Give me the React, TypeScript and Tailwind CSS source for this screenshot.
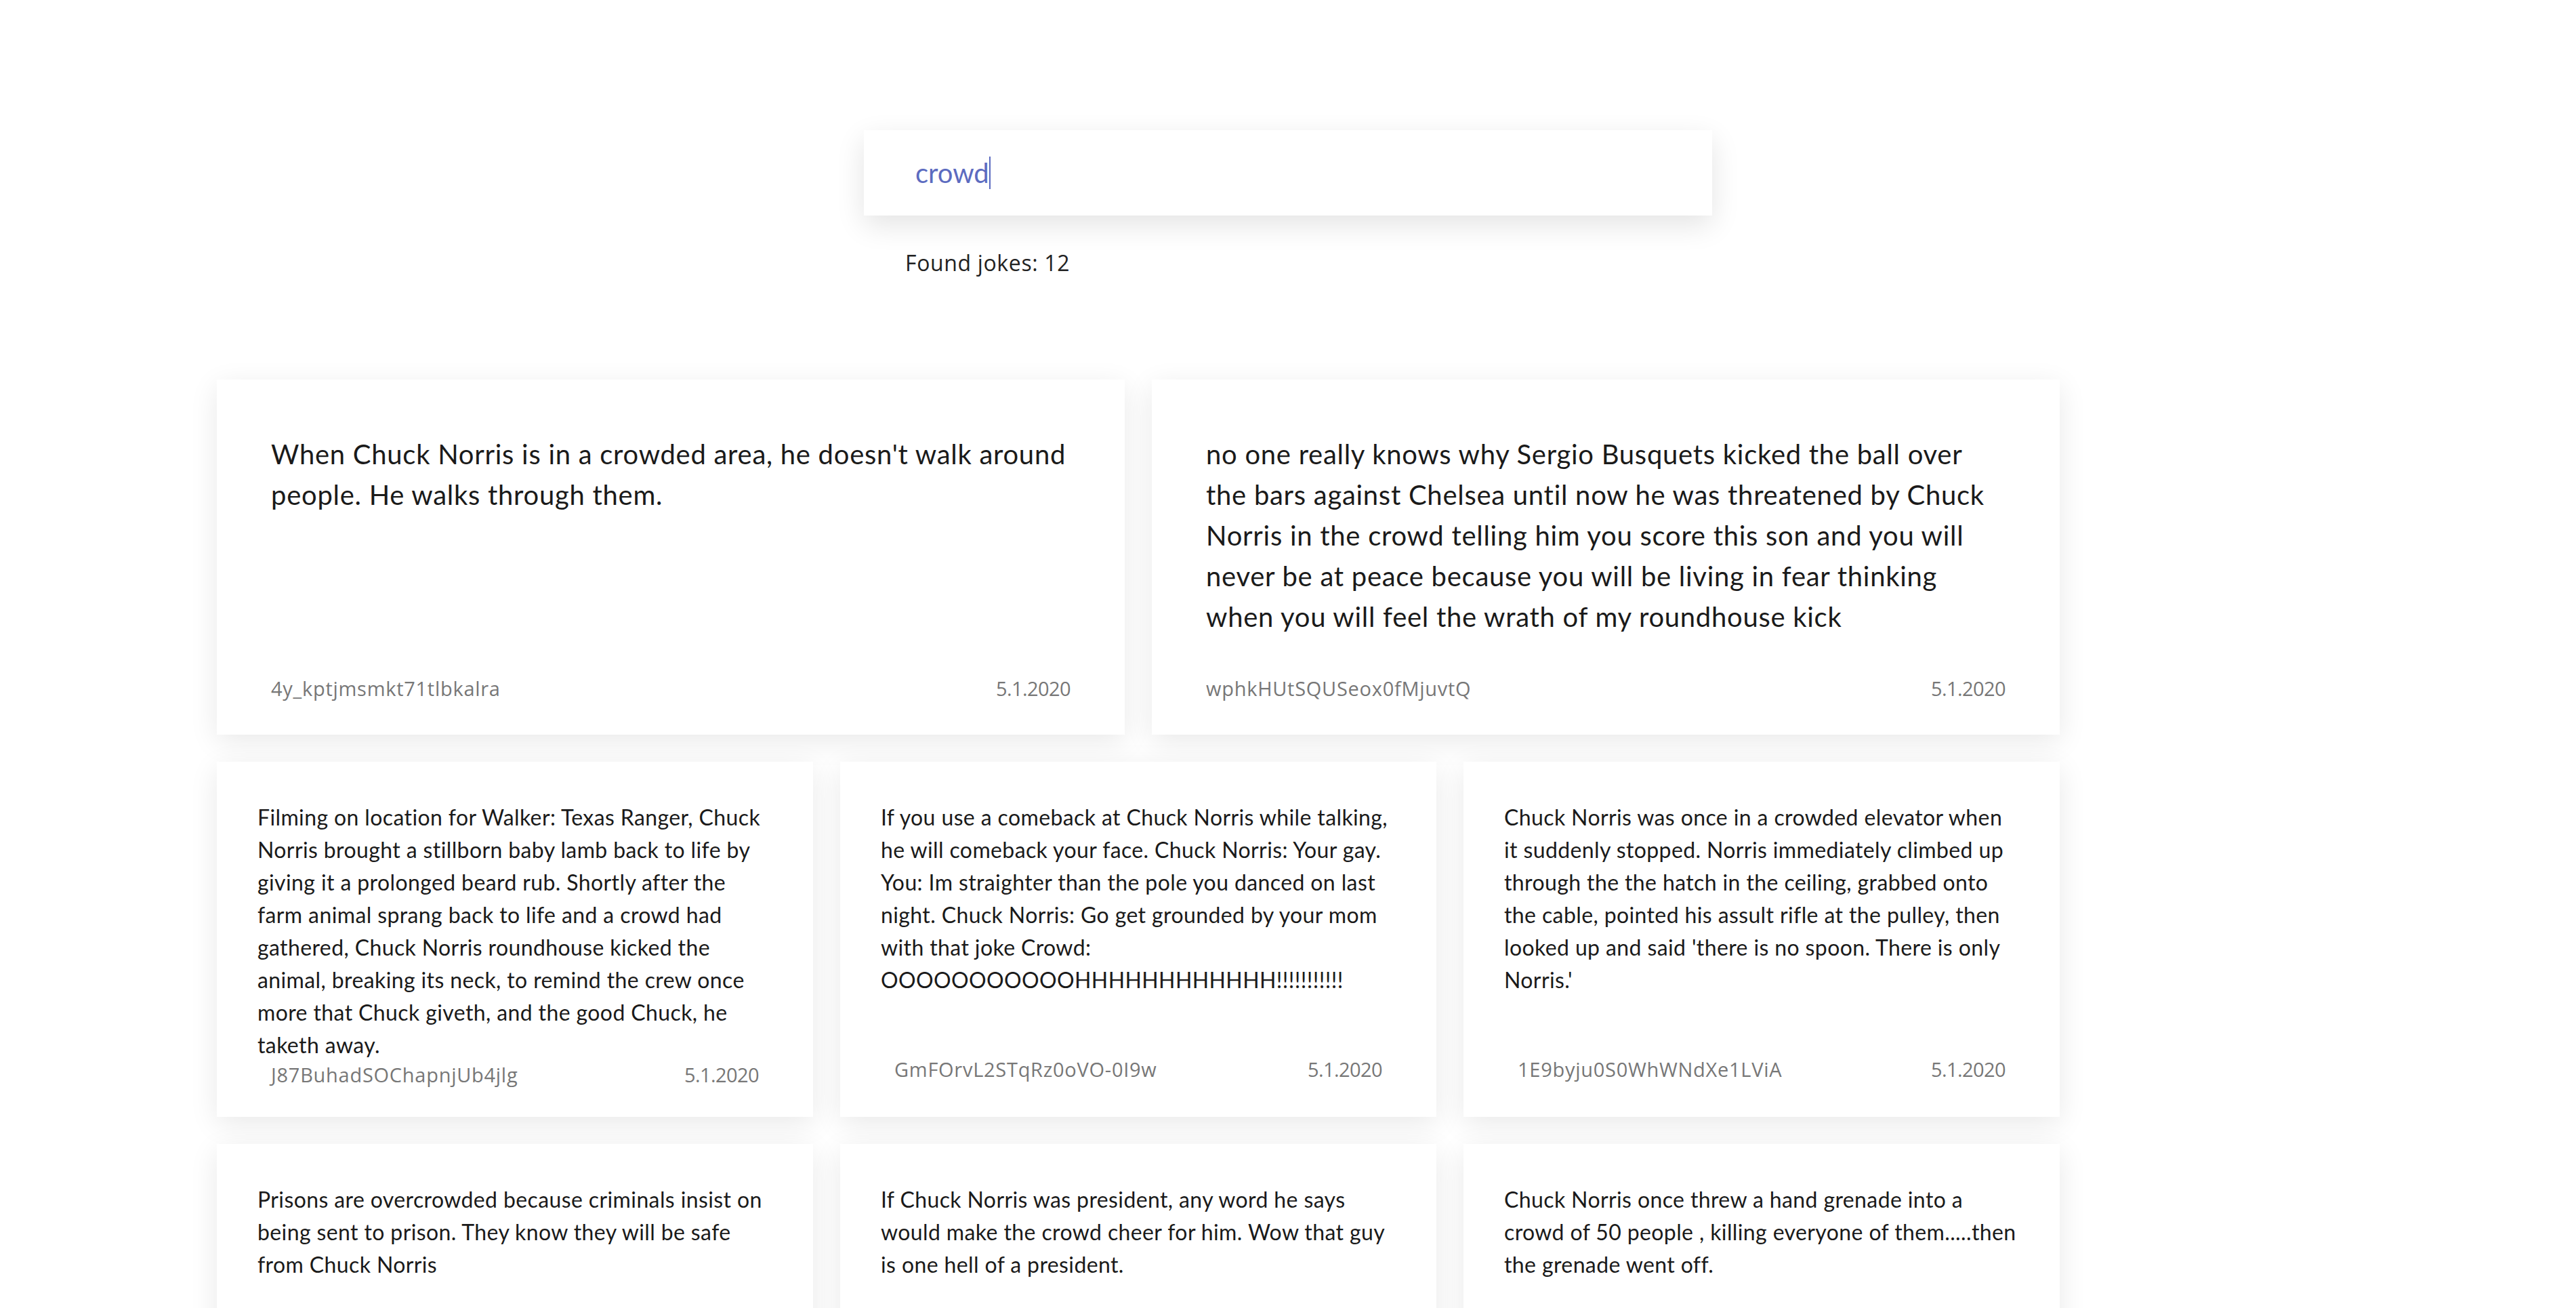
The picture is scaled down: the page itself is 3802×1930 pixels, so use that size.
import React from 'react';

interface Joke {
  id: string;
  value: string;
  date: string;
}

const query = 'crowd';

const jokes: Joke[] = [
  {
    id: '4y_kptjmsmkt71tlbkalra',
    value: "When Chuck Norris is in a crowded area, he doesn't walk around people. He walks through them.",
    date: '5.1.2020',
  },
  {
    id: 'wphkHUtSQUSeox0fMjuvtQ',
    value:
      'no one really knows why Sergio Busquets kicked the ball over the bars against Chelsea until now he was threatened by Chuck Norris in the crowd telling him you score this son and you will never be at peace because you will be living in fear thinking when you will feel the wrath of my roundhouse kick',
    date: '5.1.2020',
  },
  {
    id: 'J87BuhadSOChapnjUb4jlg',
    value:
      'Filming on location for Walker: Texas Ranger, Chuck Norris brought a stillborn baby lamb back to life by giving it a prolonged beard rub. Shortly after the farm animal sprang back to life and a crowd had gathered, Chuck Norris roundhouse kicked the animal, breaking its neck, to remind the crew once more that Chuck giveth, and the good Chuck, he taketh away.',
    date: '5.1.2020',
  },
  {
    id: 'GmFOrvL2STqRz0oVO-0I9w',
    value:
      'If you use a comeback at Chuck Norris while talking, he will comeback your face. Chuck Norris: Your gay. You: Im straighter than the pole you danced on last night. Chuck Norris: Go get grounded by your mom with that joke Crowd: OOOOOOOOOOOHHHHHHHHHHHH!!!!!!!!!!!',
    date: '5.1.2020',
  },
  {
    id: '1E9byju0S0WhWNdXe1LViA',
    value:
      "Chuck Norris was once in a crowded elevator when it suddenly stopped. Norris immediately climbed up through the the hatch in the ceiling, grabbed onto the cable, pointed his assult rifle at the pulley, then looked up and said 'there is no spoon. There is only Norris.'",
    date: '5.1.2020',
  },
  {
    id: 'kq3tLzZsQnWmXbVq8YdB2g',
    value:
      'Prisons are overcrowded because criminals insist on being sent to prison. They know they will be safe from Chuck Norris',
    date: '5.1.2020',
  },
  {
    id: 'u2fJcR7aS1ez9TqkGvYw0A',
    value:
      'If Chuck Norris was president, any word he says would make the crowd cheer for him. Wow that guy is one hell of a president.',
    date: '5.1.2020',
  },
  {
    id: 'P0xNw5hRTgmCLb3dZs7KfQ',
    value:
      'Chuck Norris once threw a hand grenade into a crowd of 50 people , killing everyone of them.....then the grenade went off.',
    date: '5.1.2020',
  },
];

function JokeCard({ joke, big }: { joke: Joke; big: boolean }) {
  return (
    <div
      className={
        big
          ? 'col-span-3 h-[524px] bg-white flex flex-col justify-between pt-[80px] pb-[48px] px-[80px] shadow-[0_10px_40px_rgba(0,0,0,0.09)]'
          : 'col-span-2 h-[524px] bg-white flex flex-col justify-between pt-[58px] pb-[50px] px-[60px] shadow-[0_10px_40px_rgba(0,0,0,0.09)]'
      }
    >
      <p
        className={
          big
            ? 'shrink-0 text-[40px] leading-[60px] tracking-[0.018em] text-[#1a1a1a] font-["Lato",sans-serif]'
            : 'shrink-0 text-[32px] leading-[48px] tracking-[0.012em] text-[#1a1a1a] font-["Lato",sans-serif]'
        }
      >
        {joke.value}
      </p>
      <div
        className={
          big
            ? 'shrink-0 h-[40px] flex items-center justify-between text-[29px] text-[#777] font-["Open_Sans",sans-serif]'
            : 'shrink-0 h-[40px] px-[20px] flex items-center justify-between text-[29px] text-[#777] font-["Open_Sans",sans-serif]'
        }
      >
        <span className="tracking-[0.025em]">{joke.id}</span>
        <span className="tracking-[-0.02em]">{joke.date}</span>
      </div>
    </div>
  );
}

export default function App() {
  return (
    <div className="min-h-screen bg-white pt-[192px]">
      {/* search */}
      <div className="w-[1252px] mx-auto">
        <div className="h-[126px] bg-white flex items-center pl-[76px] shadow-[0_14px_40px_rgba(0,0,0,0.11)]">
          <span className='text-[40px] text-[#5c6bc0] font-["Lato",sans-serif]'>{query}</span>
          <span className="w-[2px] h-[48px] bg-[#5c6bc0]" />
        </div>
        <p className='mt-[47px] pl-[61px] text-[32px] leading-[46px] tracking-[0.02em] text-[#222] font-["Open_Sans",sans-serif]'>
          Found jokes: 12
        </p>
      </div>

      {/* results */}
      <div className="mt-[149px] px-[320px] pb-[80px]">
        <div className="grid grid-cols-[repeat(6,420px)] gap-[40px]">
          {jokes.map((joke, i) => (
            <JokeCard key={joke.id} joke={joke} big={i < 2} />
          ))}
        </div>
      </div>
    </div>
  );
}
